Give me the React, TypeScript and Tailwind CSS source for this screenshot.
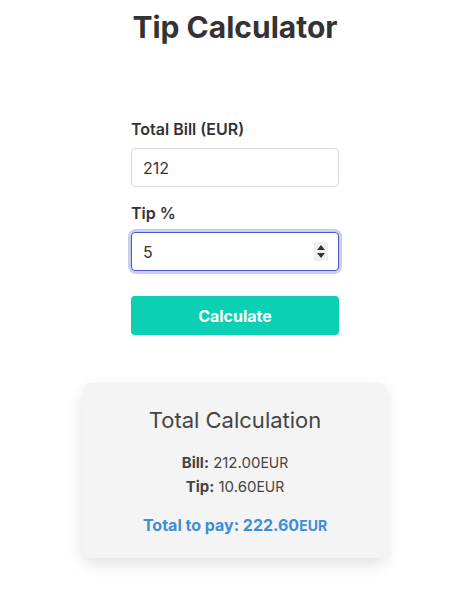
import { useState } from 'react'

export default function App() {
  const [bill, setBill] = useState('212')
  const [tip, setTip] = useState('5')

  const billNum = parseFloat(bill) || 0
  const tipAmount = (billNum * (parseFloat(tip) || 0)) / 100
  const total = billNum + tipAmount

  return (
    <div className="min-h-screen bg-white font-['Inter',sans-serif] text-[#333]">
      <div className="flex flex-col items-center pt-[7px] pl-[2px]">
        <h1 className="text-[30px] leading-[40px] font-bold text-[#333]">Tip Calculator</h1>

        <div className="mt-[72px] flex w-[208px] flex-col">
          <label className="text-[16px] leading-5 font-semibold text-[#333]">Total Bill (EUR)</label>
          <input
            type="number"
            value={bill}
            onChange={(e) => setBill(e.target.value)}
            className="mt-[9px] h-[39px] w-full rounded-[4px] border border-[#d9d9d9] bg-white px-[11px] text-[16px] text-[#333] outline-none [appearance:textfield] [&::-webkit-inner-spin-button]:appearance-none"
          />

          <label className="mt-[16px] text-[16px] leading-5 font-semibold text-[#333]">Tip %</label>
          <div className="relative mt-[9px] rounded-[5px] ring-[3px] ring-[#c9cdf2]">
            <input
              type="number"
              value={tip}
              onChange={(e) => setTip(e.target.value)}
              className="h-[39px] w-full rounded-[4px] border border-[#4a58c9] bg-white px-[11px] text-[16px] text-[#333] outline-none [appearance:textfield] [&::-webkit-inner-spin-button]:appearance-none"
            />
            <div className="pointer-events-none absolute top-[10px] right-[11px] flex h-[19px] w-[14px] flex-col items-center justify-center gap-[3px] bg-[#efefef]">
              <svg width="8" height="5" viewBox="0 0 8 5"><path d="M4 0L8 5H0z" fill="#333" /></svg>
              <svg width="8" height="5" viewBox="0 0 8 5"><path d="M0 0h8L4 5z" fill="#333" /></svg>
            </div>
          </div>

          <button className="mt-[25px] h-[39px] w-full rounded-[4px] bg-[#0bd0b3] text-[16px] font-bold text-white">
            Calculate
          </button>
        </div>

        <div className="mt-[48px] flex w-[304px] flex-col items-center rounded-[8px] bg-[#f4f4f4] pt-[22px] pb-[20px] shadow-[0_6px_16px_rgba(0,0,0,0.12)]">
          <h2 className="text-[22px] leading-[30px] font-normal text-[#444]">Total Calculation</h2>
          <p className="mt-[16px] text-[15px] leading-6 text-[#444]">
            <span className="font-bold">Bill:</span> {billNum.toFixed(2)}
            <span className="text-[14px]">EUR</span>
          </p>
          <p className="text-[15px] leading-6 text-[#444]">
            <span className="font-bold">Tip:</span> {tipAmount.toFixed(2)}
            <span className="text-[14px]">EUR</span>
          </p>
          <p className="mt-[14px] text-[16px] leading-6 font-bold text-[#3d8ed4]">
            Total to pay: {total.toFixed(2)}
            <span className="text-[14px]">EUR</span>
          </p>
        </div>
      </div>
    </div>
  )
}
